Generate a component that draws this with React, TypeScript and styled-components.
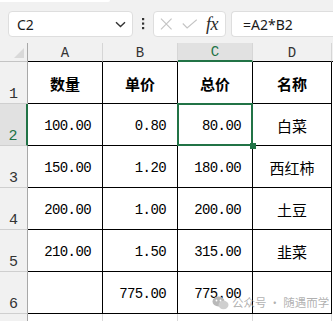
import React from 'react'
import styled, { createGlobalStyle, css } from 'styled-components'

const GREEN = '#217346'
const MONO = `"Liberation Mono", "Noto Sans CJK SC", monospace`
const CJK = `"Noto Sans CJK SC", "Noto Sans", sans-serif`

const GlobalStyle = createGlobalStyle`
  html, body {
    margin: 0;
    padding: 0;
    background: #f1f1f1;
  }
  * {
    box-sizing: border-box;
  }
`

const Page = styled.div`
  position: relative;
  width: 333px;
  height: 321px;
  overflow: hidden;
  background: #f1f1f1;
  font-family: "Noto Sans", "Liberation Sans", sans-serif;
`

const TopStrip = styled.div`
  height: 3px;
`
const Tab = styled.div`
  width: 110px;
  height: 2px;
  background: #ffffff;
  border-bottom-right-radius: 3px;
`

const Toolbar = styled.div`
  display: flex;
  align-items: center;
  height: 40px;
  padding: 8px 0 6px 8px;
`

const NameBox = styled.div`
  display: flex;
  align-items: center;
  justify-content: space-between;
  width: 125px;
  height: 26px;
  padding: 0 6px 0 8px;
  background: #ffffff;
  border: 1px solid #dedede;
  border-radius: 4px;
  font-size: 14px;
  color: #1a1a1a;
`

const Dots = styled.div`
  display: flex;
  justify-content: center;
  width: 20px;
`

const FxBox = styled.div`
  display: flex;
  align-items: center;
  width: 73px;
  height: 26px;
  padding: 0 4px 0 6px;
  gap: 9px;
  background: #ffffff;
  border: 1px solid #dedede;
  border-radius: 4px;
`

const Fx = styled.span`
  margin-left: auto;
  font-family: "Liberation Serif", serif;
  font-style: italic;
  font-size: 18px;
  line-height: 1;
  color: #2b2b2b;
  letter-spacing: -0.5px;
  padding-right: 3px;
`

const FormulaBox = styled.div`
  display: flex;
  align-items: center;
  flex: 1;
  height: 26px;
  margin-left: 5px;
  padding-left: 11px;
  background: #ffffff;
  border: 1px solid #dedede;
  border-right: none;
  border-radius: 4px 0 0 4px;
  font-size: 14px;
  color: #1a1a1a;
`

const Sheet = styled.div`
  display: grid;
  grid-template-columns: 28px 75px 75px 75px 79px 10px;
  grid-template-rows: 19px repeat(6, 42px) 20px;
  background: #ffffff;
`

const Corner = styled.div`
  position: relative;
  background: #f1f1f1;
  border-right: 1px solid #a8a8a8;
  border-bottom: 1px solid #c4c4c4;
  &::after {
    content: '';
    position: absolute;
    right: 3px;
    bottom: 3px;
    width: 10px;
    height: 10px;
    background: #d9d9d9;
    clip-path: polygon(100% 0, 100% 100%, 0 100%);
  }
`

const ColHead = styled.div<{ $active?: boolean; $edge?: boolean }>`
  display: flex;
  align-items: center;
  justify-content: center;
  font-family: ${MONO};
  font-size: 14px;
  color: ${(p) => (p.$active ? GREEN : '#333333')};
  background: ${(p) => (p.$active ? '#e1e1e1' : '#f1f1f1')};
  border-right: 1px solid ${(p) => (p.$edge ? 'transparent' : '#d6d6d6')};
  border-bottom: ${(p) => (p.$active ? `2px solid ${GREEN}` : '1px solid #000000')};
  padding-top: 1px;
`

const RowHead = styled.div<{ $active?: boolean; $last?: boolean }>`
  display: flex;
  align-items: flex-end;
  justify-content: center;
  padding-bottom: 1px;
  font-family: ${MONO};
  font-size: 15px;
  line-height: 1;
  color: ${(p) => (p.$active ? GREEN : '#333333')};
  background: ${(p) => (p.$active ? '#e1e1e1' : '#f1f1f1')};
  border-right: ${(p) => (p.$active ? `2px solid ${GREEN}` : '1px solid #a8a8a8')};
  border-bottom: 1px solid ${(p) => (p.$last ? 'transparent' : '#cfcfcf')};
`

const Cell = styled.div<{
  $align: 'right' | 'center'
  $bold?: boolean
  $cjk?: boolean
  $selected?: boolean
}>`
  position: relative;
  display: flex;
  align-items: center;
  justify-content: ${(p) => (p.$align === 'right' ? 'flex-end' : 'center')};
  padding-right: ${(p) => (p.$align === 'right' ? '11px' : '0')};
  padding-top: 2px;
  border-right: 1px solid #000000;
  border-bottom: 1px solid #000000;
  color: #000000;
  font-family: ${(p) => (p.$cjk ? CJK : MONO)};
  font-size: ${(p) => (p.$cjk ? '15px' : '14px')};
  font-weight: ${(p) => (p.$bold ? 700 : 400)};
  letter-spacing: ${(p) => (p.$cjk ? '0' : '-0.6px')};
  ${(p) =>
    p.$selected &&
    css`
      &::after {
        content: '';
        position: absolute;
        left: -1px;
        top: -1px;
        right: -1px;
        bottom: -1px;
        border: 2px solid ${GREEN};
      }
      &::before {
        content: '';
        position: absolute;
        right: -4px;
        bottom: -4px;
        width: 6px;
        height: 6px;
        background: ${GREEN};
        z-index: 2;
      }
    `}
`

const BlankCell = styled.div<{ $edge?: boolean }>`
  border-right: 1px solid ${(p) => (p.$edge ? 'transparent' : '#d9d9d9')};
  background: #ffffff;
`

const Watermark = styled.div`
  position: absolute;
  left: 212px;
  top: 295px;
  display: flex;
  align-items: center;
  gap: 3px;
  white-space: nowrap;
  font-family: ${CJK};
  font-size: 11.5px;
  line-height: 15px;
  color: rgba(150, 150, 150, 0.75);
`

const ChevronIcon = () => (
  <svg width="11" height="7" viewBox="0 0 11 7">
    <path d="M1 1.2 L5.5 5.6 L10 1.2" fill="none" stroke="#333" strokeWidth="1.4" />
  </svg>
)

const DotsIcon = () => (
  <svg width="4" height="14" viewBox="0 0 4 14">
    <rect x="1" y="1" width="2.2" height="2.2" fill="#333" />
    <rect x="1" y="5.5" width="2.2" height="2.2" fill="#333" />
    <rect x="1" y="10" width="2.2" height="2.2" fill="#333" />
  </svg>
)

const CrossIcon = () => (
  <svg width="13" height="12" viewBox="0 0 13 12">
    <path d="M1 0.5 L12 11.5 M12 0.5 L1 11.5" stroke="#c4c4c4" strokeWidth="1.2" />
  </svg>
)

const CheckIcon = () => (
  <svg width="16" height="10" viewBox="0 0 16 10">
    <path d="M0.8 4.5 L5.3 9 L15.3 0.6" fill="none" stroke="#c4c4c4" strokeWidth="1.2" />
  </svg>
)

const WechatIcon = () => (
  <svg width="17" height="14" viewBox="0 0 17 14">
    <ellipse cx="6.5" cy="5.5" rx="6" ry="5" fill="#b9b9b9" />
    <ellipse cx="11.5" cy="9" rx="5" ry="4.2" fill="#cfcfcf" />
    <circle cx="4.5" cy="4.5" r="0.9" fill="#fff" />
    <circle cx="8.5" cy="4.5" r="0.9" fill="#fff" />
  </svg>
)

type Row = { values: string[]; header?: boolean }

const rows: Row[] = [
  { values: ['数量', '单价', '总价', '名称'], header: true },
  { values: ['100.00', '0.80', '80.00', '白菜'] },
  { values: ['150.00', '1.20', '180.00', '西红柿'] },
  { values: ['200.00', '1.00', '200.00', '土豆'] },
  { values: ['210.00', '1.50', '315.00', '韭菜'] },
  { values: ['', '775.00', '775.00', ''] },
]

const columns = ['A', 'B', 'C', 'D']

const App = (): JSX.Element => {
  return (
    <Page>
      <GlobalStyle />
      <TopStrip>
        <Tab />
      </TopStrip>
      <Toolbar>
        <NameBox>
          <span>C2</span>
          <ChevronIcon />
        </NameBox>
        <Dots>
          <DotsIcon />
        </Dots>
        <FxBox>
          <CrossIcon />
          <CheckIcon />
          <Fx>fx</Fx>
        </FxBox>
        <FormulaBox>=A2*B2</FormulaBox>
      </Toolbar>

      <Sheet>
        <Corner />
        {columns.map((c) => (
          <ColHead key={c} $active={c === 'C'}>
            {c}
          </ColHead>
        ))}
        <ColHead $edge />

        {rows.map((row, r) => (
          <React.Fragment key={r}>
            <RowHead $active={r === 1}>{r + 1}</RowHead>
            {row.values.map((v, c) => {
              const isName = c === 3 || row.header
              return (
                <Cell
                  key={c}
                  $align={isName ? 'center' : 'right'}
                  $cjk={isName}
                  $bold={row.header}
                  $selected={r === 1 && c === 2}
                >
                  {v}
                </Cell>
              )
            })}
            <BlankCell $edge />
          </React.Fragment>
        ))}

        <RowHead $last />
        {columns.map((c) => (
          <BlankCell key={c} />
        ))}
        <BlankCell $edge />
      </Sheet>

      <Watermark>
        <WechatIcon />
        <span>公众号 · 随遇而学</span>
      </Watermark>
    </Page>
  )
}

export default App
